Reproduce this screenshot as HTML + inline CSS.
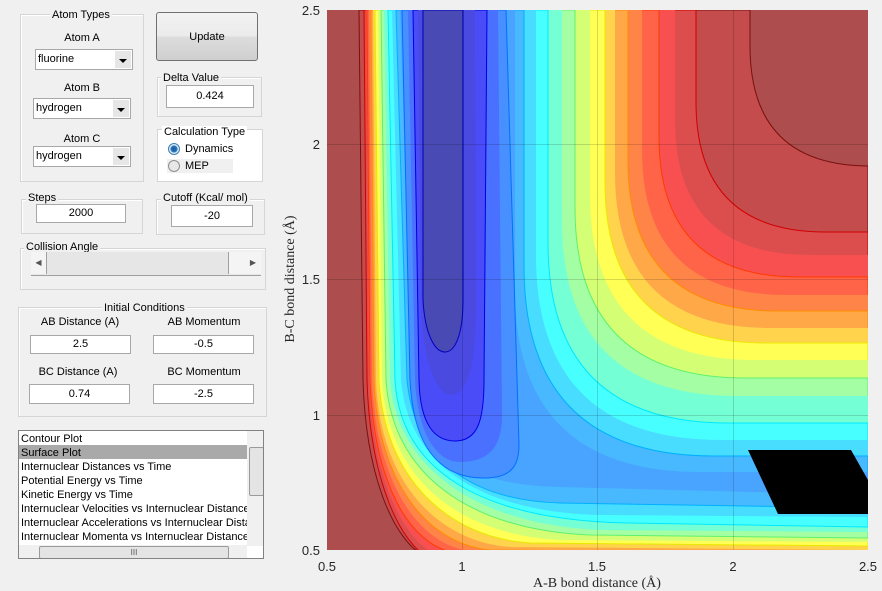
<!DOCTYPE html>
<html><head><meta charset="utf-8"><style>
body{margin:0;width:882px;height:591px;background:#f0f0f0;position:relative;overflow:hidden;font-family:"Liberation Sans",sans-serif;font-size:11px;color:#000}
.a{position:absolute}
.grp{position:absolute;border:1px solid #d5d5d5;box-shadow:1px 1px 0 #fff inset}
.gt{position:absolute;background:#f0f0f0;padding:0 2px;font-size:11px;line-height:12px;white-space:nowrap}
.in{position:absolute;background:#fff;border:1px solid #a8a8a8;text-align:center;font-size:11px;box-sizing:border-box}
.sel{position:absolute;background:#fff;border:1px solid #a8a8a8;box-sizing:border-box;font-size:11px;padding-left:2px}
.sel b{position:absolute;right:1px;top:1px;bottom:1px;width:16px;background:#e6e6e6;font-weight:normal}
.sel b:after{content:"";position:absolute;left:4px;top:8px;border:4px solid transparent;border-top:4px solid #000;border-bottom:0}
.lbl{position:absolute;text-align:center;font-size:11px}
</style></head><body>

<div class="grp" style="left:20px;top:14px;width:122px;height:166px"></div>
<div class="gt" style="left:50px;top:9px">Atom Types</div>
<div class="lbl" style="left:40px;top:32px;width:84px">Atom A</div>
<div class="sel" style="left:35px;top:49px;width:98px;height:21px;line-height:19px">fluorine<b></b></div>
<div class="lbl" style="left:40px;top:82px;width:84px">Atom B</div>
<div class="sel" style="left:33px;top:98px;width:98px;height:21px;line-height:19px">hydrogen<b></b></div>
<div class="lbl" style="left:40px;top:133px;width:84px">Atom C</div>
<div class="sel" style="left:33px;top:146px;width:98px;height:21px;line-height:19px">hydrogen<b></b></div>

<div class="a" style="left:156px;top:12px;width:102px;height:49px;border:1px solid #707070;border-radius:3px;background:linear-gradient(#f2f2f2 0%,#ebebeb 50%,#dddddd 50%,#cfcfcf 100%);text-align:center;line-height:49px;box-sizing:border-box">Update</div>

<div class="grp" style="left:157px;top:77px;width:103px;height:38px"></div>
<div class="gt" style="left:161px;top:72px">Delta Value</div>
<div class="in" style="left:166px;top:85px;width:88px;height:23px;line-height:21px">0.424</div>

<div class="grp" style="left:157px;top:129px;width:104px;height:51px;background:#fff"></div>
<div class="gt" style="left:162px;top:126px;background:#fff">Calculation Type</div>
<div class="a" style="left:168px;top:143px;width:12px;height:12px;border-radius:50%;border:1px solid #3c7fb1;background:radial-gradient(circle,#1b5a9a 0,#2a73b8 3px,#d8ecf8 4px,#eaf4fb 6px);box-sizing:border-box"></div>
<div class="a" style="left:185px;top:143px">Dynamics</div>
<div class="a" style="left:167px;top:159px;width:66px;height:14px;background:#f0f0f0"></div>
<div class="a" style="left:168px;top:160px;width:12px;height:12px;border-radius:50%;border:1px solid #8f8f8f;background:#e8e8e8;box-sizing:border-box"></div>
<div class="a" style="left:185px;top:160px">MEP</div>

<div class="grp" style="left:21px;top:199px;width:120px;height:33px"></div>
<div class="gt" style="left:26px;top:192px">Steps</div>
<div class="in" style="left:36px;top:204px;width:90px;height:19px;line-height:17px">2000</div>

<div class="grp" style="left:156px;top:199px;width:107px;height:34px"></div>
<div class="gt" style="left:161px;top:192px">Cutoff (Kcal/ mol)</div>
<div class="in" style="left:171px;top:205px;width:82px;height:22px;line-height:20px">-20</div>

<div class="grp" style="left:20px;top:248px;width:244px;height:40px"></div>
<div class="gt" style="left:24px;top:241px">Collision Angle</div>
<div class="a" style="left:31px;top:252px;width:230px;height:23px;background:#e6e6e6;border-bottom:1px solid #a0a0a0"></div>
<div class="a" style="left:31px;top:252px;width:15px;height:22px;background:#f4f4f4;border-right:1px solid #a0a0a0;font-size:8px;line-height:22px;text-align:center;color:#555">◀</div>
<div class="a" style="left:228px;top:252px;width:16px;height:22px;background:#f4f4f4;border-left:1px solid #a0a0a0;border-right:1px solid #a0a0a0"></div>
<div class="a" style="left:245px;top:252px;width:16px;height:22px;background:#f4f4f4;font-size:8px;line-height:22px;text-align:center;color:#555">▶</div>

<div class="grp" style="left:18px;top:307px;width:247px;height:108px"></div>
<div class="gt" style="left:102px;top:302px">Initial Conditions</div>
<div class="lbl" style="left:20px;top:316px;width:120px">AB Distance (A)</div>
<div class="lbl" style="left:144px;top:316px;width:120px">AB Momentum</div>
<div class="in" style="left:30px;top:335px;width:101px;height:19px;line-height:17px">2.5</div>
<div class="in" style="left:153px;top:335px;width:101px;height:19px;line-height:17px">-0.5</div>
<div class="lbl" style="left:18px;top:366px;width:120px">BC Distance (A)</div>
<div class="lbl" style="left:144px;top:366px;width:120px">BC Momentum</div>
<div class="in" style="left:29px;top:384px;width:101px;height:20px;line-height:18px">0.74</div>
<div class="in" style="left:153px;top:384px;width:101px;height:20px;line-height:18px">-2.5</div>

<div class="a" style="left:18px;top:430px;width:246px;height:129px;background:#fff;border:1px solid #828282;box-sizing:border-box;overflow:hidden">
 <div class="a" style="left:0;top:14px;width:228px;height:14px;background:#a9a9a9"></div>
 <div class="a" style="left:2px;top:1px;line-height:14px;white-space:nowrap;width:226px;overflow:hidden">Contour Plot<br>Surface Plot<br>Internuclear Distances vs Time<br>Potential Energy vs Time<br>Kinetic Energy vs Time<br>Internuclear Velocities vs Internuclear Distance<br>Internuclear Accelerations vs Internuclear Distance<br>Internuclear Momenta vs Internuclear Distance</div>
 <div class="a" style="left:228px;top:0;width:17px;height:115px;background:#f0f0f0"></div>
 <div class="a" style="left:230px;top:16px;width:13px;height:47px;background:#e4e4e4;border:1px solid #9a9a9a;border-radius:2px"></div>
 <div class="a" style="left:0;top:114px;width:228px;height:14px;background:#f0f0f0"></div>
 <div class="a" style="left:20px;top:115px;width:188px;height:11px;background:#e4e4e4;border:1px solid #9a9a9a;border-radius:2px;font-size:8px;line-height:11px;text-align:center;color:#555">III</div>
</div>

<svg class="a" style="left:0;top:0" width="882" height="591" viewBox="0 0 882 591">
<defs><clipPath id="c"><rect x="327" y="10" width="541" height="540"/></clipPath></defs>
<g clip-path="url(#c)">
<rect x="327" y="10" width="541" height="540" fill="#ad4d4d"/>
<g stroke-width="1">
<path d="M359,10 L363,380 C366,480 395,540 424,556 L868,580 L868,166 L870,166 Q750,166 750,46 L750,10 Z" fill="#c44c4c" stroke="#7a1010"/>
<path d="M364,10 L367,380 C370,480 400,545 432,560 L868,575 L868,232 L826,232 Q696,232 696,102 L696,10 Z" fill="#dc4e4e" stroke="#d00000"/>
<path d="M366,10 L369,380 C372,480 405,545 440,556 L868,570 L868,255 L810,255 Q675,255 675,120 L675,10 Z" fill="#f85050" stroke="none"/>
<path d="M367,10 L370,380 C374,485 410,545 455,553 L868,565 L868,277 L799,277 Q659,277 659,137 L659,10 Z" fill="#ff6448" stroke="#ff3a00"/>
<path d="M369,10 L372,380 C376,485 420,545 470,551 L868,558 L868,295 L787,295 Q642,295 642,150 L642,10 Z" fill="#ff8448" stroke="none"/>
<path d="M371,10 L374,380 C378,485 430,545 490,550 L868,553 L868,311 L778,311 Q628,311 628,161 L628,10 Z" fill="#ffa848" stroke="#ff8c00"/>
<path d="M373,10 L376,380 C380,485 440,542 510,547 L868,550 L868,328 L770,328 Q615,328 615,173 L615,10 Z" fill="#ffd44c" stroke="none"/>
<path d="M375,10 L379,380 C384,480 450,538 530,543 L868,546 L868,343 L765,343 Q605,343 605,183 L605,10 Z" fill="#ffff55" stroke="#e8e800"/>
<path d="M378,10 L382,380 C388,480 460,535 560,540 L868,542 L868,360 L755,360 Q590,360 590,195 L590,10 Z" fill="#d4ff74" stroke="none"/>
<path d="M381,10 L386,380 C392,475 470,530 590,535 L868,538 L868,378 L745,378 Q575,378 575,208 L575,10 Z" fill="#a4ffa4" stroke="#60f070"/>
<path d="M384,10 L390,380 C396,470 480,525 600,530 L868,532 L868,396 L737,396 Q562,396 562,221 L562,10 Z" fill="#74ffd4" stroke="none"/>
<path d="M388,10 L395,380 C400,470 480,520 627,523 L868,527 L868,423 L728,423 Q548,423 548,243 L548,10 Z" fill="#48ffff" stroke="#00e8ff"/>
<path d="M392,10 L401,380 C408,465 480,512 600,515 L868,517 L868,440 L721,440 Q536,440 536,255 L536,10 Z" fill="#48dcff" stroke="none"/>
<path d="M396,10 L407,380 C415,460 470,500 560,503 L868,508 L868,456 L714,456 Q524,456 524,266 L524,10 Z" fill="#48b8ff" stroke="#00b0ff"/>
<path d="M400,10 L412,380 C420,455 470,485 560,487 L868,495 L868,472 L700,472 Q515,472 515,290 L515,10 Z" fill="#48a4ff" stroke="none"/>
<path d="M402,10 L410,380 C414,460 450,478 484,478 C512,478 519,465 519,445 L506,10 Z" fill="#4890ff" stroke="#0070ff"/>
<path d="M408,10 L415,380 C418,440 440,462 460,462 C495,462 503,440 502,410 L498,10 Z" fill="#4a70ff" stroke="none"/>
<path d="M413,10 L419,380 C420,425 435,441 455,441 C478,441 484,420 484,380 L487,10 Z" fill="#4a4cf8" stroke="#0000e0"/>
<path d="M418,10 L421,300 C422,370 440,395 450,395 C470,395 476,360 476,300 L475,10 Z" fill="#4a4ae0" stroke="none"/>
<path d="M423,10 L423,300 C425,335 435,352 445,352 C455,352 463,335 463,300 L463,10 Z" fill="#4a4ab4" stroke="#0000c0"/>
</g>
<g stroke="#000" stroke-opacity="0.15" stroke-width="1">
<line x1="462.5" y1="10" x2="462.5" y2="550"/><line x1="597.5" y1="10" x2="597.5" y2="550"/><line x1="733.5" y1="10" x2="733.5" y2="550"/>
<line x1="327" y1="144.5" x2="868" y2="144.5"/><line x1="327" y1="279.5" x2="868" y2="279.5"/><line x1="327" y1="415.5" x2="868" y2="415.5"/>
</g>
<polygon points="748,450 851,450 868,480 868,514 778,514" fill="#000"/>
</g>
<g font-family="Liberation Sans, sans-serif" font-size="13" fill="#262626">
<text x="327" y="571" text-anchor="middle">0.5</text>
<text x="462" y="571" text-anchor="middle">1</text>
<text x="597" y="571" text-anchor="middle">1.5</text>
<text x="733" y="571" text-anchor="middle">2</text>
<text x="868" y="571" text-anchor="middle">2.5</text>
<text x="320" y="15" text-anchor="end">2.5</text>
<text x="320" y="149" text-anchor="end">2</text>
<text x="320" y="284" text-anchor="end">1.5</text>
<text x="320" y="420" text-anchor="end">1</text>
<text x="320" y="555" text-anchor="end">0.5</text>
</g>
<g font-family="Liberation Serif, serif" font-size="14" fill="#262626">
<text x="597" y="587" text-anchor="middle">A-B bond distance (Å)</text>
<text transform="translate(294,279) rotate(-90)" text-anchor="middle">B-C bond distance (Å)</text>
</g>
</svg>
</body></html>
